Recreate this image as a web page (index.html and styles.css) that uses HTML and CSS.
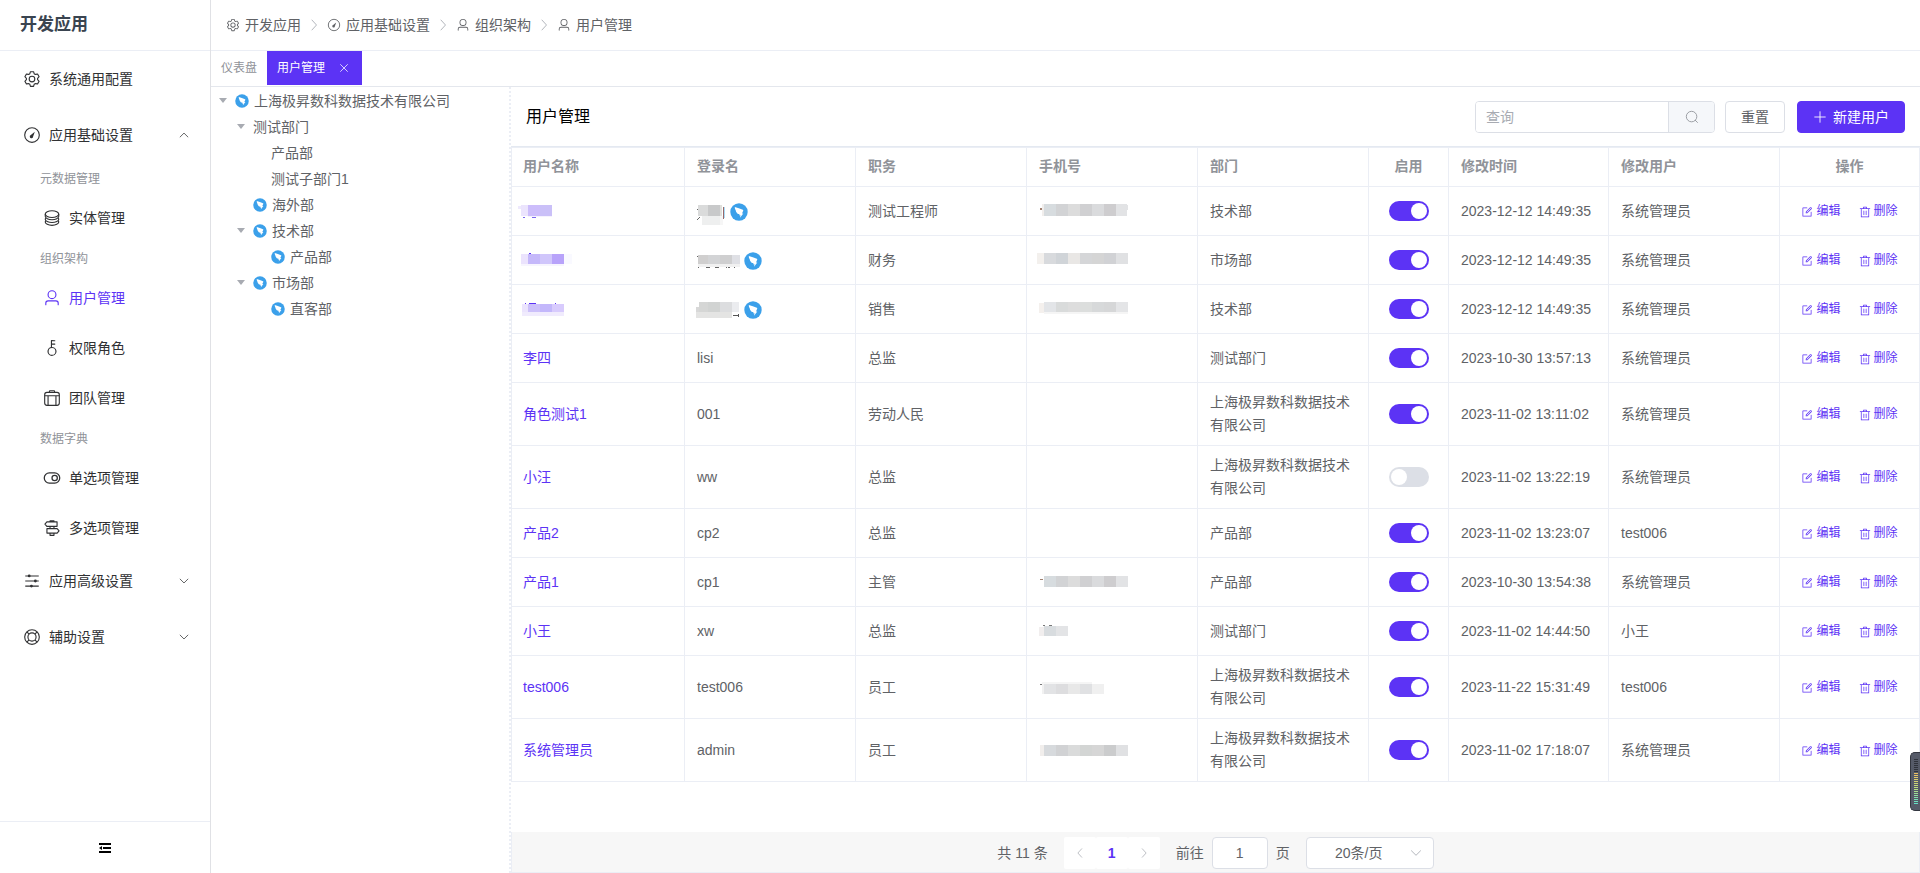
FILE: index.html
```html
<!DOCTYPE html>
<html lang="zh-CN">
<head>
<meta charset="utf-8">
<title>用户管理</title>
<link rel="stylesheet" href="styles.css">
</head>
<body>
<svg class="sprite" aria-hidden="true">
  <symbol id="i-setting" viewBox="0 0 1024 1024"><path fill="currentColor" d="M600.704 64a32 32 0 0 1 30.464 22.208l35.2 109.376c14.784 7.232 28.928 15.36 42.432 24.512l112.384-24.192a32 32 0 0 1 34.432 15.36L944.32 364.8a32 32 0 0 1-4.032 37.504l-77.12 85.12a357.12 357.12 0 0 1 0 49.024l77.12 85.248a32 32 0 0 1 4.032 37.504l-88.704 153.6a32 32 0 0 1-34.432 15.296L708.8 803.904c-13.44 9.088-27.648 17.28-42.368 24.512l-35.264 109.376A32 32 0 0 1 600.704 960H423.296a32 32 0 0 1-30.464-22.208L357.696 828.48a351.616 351.616 0 0 1-42.56-24.64l-112.32 24.256a32 32 0 0 1-34.432-15.36L79.68 659.2a32 32 0 0 1 4.032-37.504l77.12-85.248a357.12 357.12 0 0 1 0-48.896l-77.12-85.248A32 32 0 0 1 79.68 364.8l88.704-153.6a32 32 0 0 1 34.432-15.296l112.32 24.256c13.568-9.152 27.776-17.408 42.56-24.64l35.2-109.312A32 32 0 0 1 423.232 64H600.64zm-23.424 64H446.72l-36.352 113.088-24.512 11.968a294.113 294.113 0 0 0-34.816 20.096l-22.656 15.36-116.224-25.088-65.28 113.152 79.68 88.192-1.92 27.136a293.12 293.12 0 0 0 0 40.192l1.92 27.136-79.808 88.192 65.344 113.152 116.224-25.024 22.656 15.296a294.113 294.113 0 0 0 34.816 20.096l24.512 11.968L446.72 896h130.688l36.48-113.152 24.448-11.904a288.282 288.282 0 0 0 34.752-20.096l22.592-15.296 116.288 25.024 65.28-113.152-79.744-88.192 1.92-27.136a293.12 293.12 0 0 0 0-40.256l-1.92-27.136 79.808-88.128-65.344-113.152-116.288 24.96-22.592-15.232a287.616 287.616 0 0 0-34.752-20.096l-24.448-11.904L577.344 128zM512 320a192 192 0 1 1 0 384 192 192 0 0 1 0-384zm0 64a128 128 0 1 0 0 256 128 128 0 0 0 0-256z"/></symbol>
  <symbol id="i-compass" viewBox="0 0 1024 1024"><circle cx="512" cy="512" r="416" fill="none" stroke="currentColor" stroke-width="64"/><path fill="currentColor" d="M672 320L576 600a96 96 0 1 1-130-86z"/></symbol>
  <symbol id="i-coin" viewBox="0 0 1024 1024"><g fill="none" stroke="currentColor" stroke-width="64"><ellipse cx="512" cy="288" rx="384" ry="192"/><path d="M128 288v128c0 106 172 192 384 192s384-86 384-192V288M160 512c-22 26-32 38-32 64 0 106 172 192 384 192s384-86 384-192c0-26-10-38-32-64M160 672c-22 26-32 38-32 64 0 106 172 192 384 192s384-86 384-192c0-26-10-38-32-64"/></g></symbol>
  <symbol id="i-user" viewBox="0 0 1024 1024"><path fill="currentColor" d="M512 512a192 192 0 1 0 0-384 192 192 0 0 0 0 384zm0 64a256 256 0 1 1 0-512 256 256 0 0 1 0 512zm320 320v-96a96 96 0 0 0-96-96H288a96 96 0 0 0-96 96v96a32 32 0 1 1-64 0v-96a160 160 0 0 1 160-160h448a160 160 0 0 1 160 160v96a32 32 0 1 1-64 0z"/></symbol>
  <symbol id="i-key" viewBox="0 0 1024 1024"><path fill="currentColor" d="M448 456.064V96a32 32 0 0 1 32-32.064L672 64a32 32 0 0 1 0 64H512v128h160a32 32 0 0 1 0 64H512v128a256 256 0 1 1-64 8.064zM512 896a192 192 0 1 0 0-384 192 192 0 0 0 0 384z"/></symbol>
  <symbol id="i-suitcase" viewBox="0 0 1024 1024"><g fill="none" stroke="currentColor" stroke-width="64"><rect x="96" y="192" width="832" height="736" rx="128"/><path d="M352 192l32-96h256l32 96M96 384h832M288 384v544M736 384v544"/></g></symbol>
  <symbol id="i-switch" viewBox="0 0 1024 1024"><g fill="none" stroke="currentColor" stroke-width="72"><rect x="72" y="224" width="880" height="576" rx="288"/><circle cx="664" cy="512" r="152"/></g></symbol>
  <symbol id="i-guide" viewBox="0 0 1024 1024"><g fill="none" stroke="currentColor" stroke-width="64"><path d="M400 160V96h224v64M400 416v128M624 416v128M400 800v128h224V800M220 160h580v256H220L110 288zM804 544H224v256h580l110-128z" stroke-linejoin="round"/></g></symbol>
  <symbol id="i-operation" viewBox="0 0 1024 1024"><path d="M128 224h768M128 512h768M128 800h768" stroke="currentColor" stroke-width="64" fill="none"/><g fill="currentColor"><circle cx="352" cy="224" r="80"/><circle cx="704" cy="512" r="80"/><circle cx="480" cy="800" r="80"/></g></symbol>
  <symbol id="i-help" viewBox="0 0 1024 1024"><g fill="none" stroke="currentColor" stroke-width="64"><circle cx="512" cy="512" r="416"/><circle cx="512" cy="512" r="232"/><path d="M218 218l130 130M806 218L676 348M218 806l130-130M806 806L676 676"/></g></symbol>
  <symbol id="i-edit" viewBox="0 0 1024 1024"><path fill="currentColor" d="M832 512a32 32 0 1 1 64 0v352a32 32 0 0 1-32 32H160a32 32 0 0 1-32-32V160a32 32 0 0 1 32-32h352a32 32 0 0 1 0 64H192v640h640V512z"/><path fill="currentColor" d="m469.952 554.24 52.8-7.552L847.104 222.4a32 32 0 1 0-45.248-45.248L477.44 501.44l-7.552 52.8zm422.4-422.4a96 96 0 0 1 0 135.808l-331.84 331.84a32 32 0 0 1-18.112 9.088L436.8 623.68a32 32 0 0 1-36.224-36.224l15.104-105.6a32 32 0 0 1 9.024-18.112l331.904-331.84a96 96 0 0 1 135.744 0z"/></symbol>
  <symbol id="i-delete" viewBox="0 0 1024 1024"><path fill="currentColor" d="M160 256H96a32 32 0 0 1 0-64h256V95.936a32 32 0 0 1 32-32h256a32 32 0 0 1 32 32V192h256a32 32 0 1 1 0 64h-64v672a32 32 0 0 1-32 32H192a32 32 0 0 1-32-32V256zm448-64v-64H416v64h192zM224 896h576V256H224v640zm192-128a32 32 0 0 1-32-32V416a32 32 0 0 1 64 0v320a32 32 0 0 1-32 32zm192 0a32 32 0 0 1-32-32V416a32 32 0 0 1 64 0v320a32 32 0 0 1-32 32z"/></symbol>
  <symbol id="i-search" viewBox="0 0 1024 1024"><g fill="none" stroke="currentColor" stroke-width="64"><circle cx="480" cy="480" r="384"/><path d="M750 750l160 160" stroke-linecap="round"/></g></symbol>
  <symbol id="i-plus" viewBox="0 0 1024 1024"><path d="M512 128v768M128 512h768" stroke="currentColor" stroke-width="64" stroke-linecap="round"/></symbol>
  <symbol id="i-close" viewBox="0 0 1024 1024"><path d="M218 218l588 588M806 218L218 806" stroke="currentColor" stroke-width="64" stroke-linecap="round"/></symbol>
  <symbol id="i-right" viewBox="0 0 1024 1024"><path d="M364 150l330 362-330 362" stroke="currentColor" stroke-width="64" stroke-linecap="round" fill="none"/></symbol>
  <symbol id="i-left" viewBox="0 0 1024 1024"><path d="M660 150L330 512l330 362" stroke="currentColor" stroke-width="64" stroke-linecap="round" fill="none"/></symbol>
  <symbol id="i-down" viewBox="0 0 1024 1024"><path d="M180 350l332 330 332-330" stroke="currentColor" stroke-width="64" stroke-linecap="round" fill="none"/></symbol>
  <symbol id="i-up" viewBox="0 0 1024 1024"><path d="M180 680l332-330 332 330" stroke="currentColor" stroke-width="64" stroke-linecap="round" fill="none"/></symbol>
  <symbol id="i-ding" viewBox="0 0 18 18"><circle cx="9" cy="9" r="8.7" fill="#3ba0ea"/><path fill="#fff" d="M4.800 4c2.600 1 5.400 1.600 8 2.700.5.300.6.600.4 1.100l-1.200 2.600h1.300L10 14.800l.5-2.600H9.100l.4-1.200c-1.300.2-2-.2-2.500-1.100-.8-.8-1.200-1.600-1.300-2.600C5 6.200 4.700 5.100 4.800 4z"/></symbol>
  <symbol id="i-fold" viewBox="0 0 12 10"><path fill="currentColor" d="M0 0h12v2H0zM4 4h8v2H4zM0 8h12v2H0zM0 5l3-2v4z"/></symbol>
</svg>

<aside class="sidebar">
  <div class="brand">开发应用</div>
  <nav class="menu">
    <a class="menu-item" href="#"><svg class="menu-icon"><use href="#i-setting"/></svg>系统通用配置</a>
    <button class="menu-item" type="button"><svg class="menu-icon"><use href="#i-compass"/></svg>应用基础设置<svg class="menu-arrow"><use href="#i-up"/></svg></button>
    <div class="group-title">元数据管理</div>
    <a class="menu-item sub" href="#"><svg class="menu-icon"><use href="#i-coin"/></svg>实体管理</a>
    <div class="group-title">组织架构</div>
    <a class="menu-item sub active" href="#"><svg class="menu-icon"><use href="#i-user"/></svg>用户管理</a>
    <a class="menu-item sub" href="#"><svg class="menu-icon"><use href="#i-key"/></svg>权限角色</a>
    <a class="menu-item sub" href="#"><svg class="menu-icon"><use href="#i-suitcase"/></svg>团队管理</a>
    <div class="group-title">数据字典</div>
    <a class="menu-item sub" href="#"><svg class="menu-icon"><use href="#i-switch"/></svg>单选项管理</a>
    <a class="menu-item sub" href="#"><svg class="menu-icon"><use href="#i-guide"/></svg>多选项管理</a>
    <button class="menu-item" type="button"><svg class="menu-icon"><use href="#i-operation"/></svg>应用高级设置<svg class="menu-arrow"><use href="#i-down"/></svg></button>
    <button class="menu-item" type="button"><svg class="menu-icon"><use href="#i-help"/></svg>辅助设置<svg class="menu-arrow"><use href="#i-down"/></svg></button>
  </nav>
  <button class="collapse" type="button" aria-label="收起菜单"><svg class="fold-icon"><use href="#i-fold"/></svg></button>
</aside>

<div class="page">
  <nav class="breadcrumb" aria-label="breadcrumb">
    <a class="crumb" href="#"><svg class="icon-14"><use href="#i-setting"/></svg>开发应用</a>
    <svg class="icon-14 crumb-sep"><use href="#i-right"/></svg>
    <a class="crumb" href="#"><svg class="icon-14"><use href="#i-compass"/></svg>应用基础设置</a>
    <svg class="icon-14 crumb-sep"><use href="#i-right"/></svg>
    <a class="crumb" href="#"><svg class="icon-14"><use href="#i-user"/></svg>组织架构</a>
    <svg class="icon-14 crumb-sep"><use href="#i-right"/></svg>
    <a class="crumb" href="#"><svg class="icon-14"><use href="#i-user"/></svg>用户管理</a>
  </nav>
  <div class="tabs">
    <a class="tab" href="#">仪表盘</a>
    <div class="tab tab-active"><a class="tab-link" href="#">用户管理</a><button class="tab-close" type="button" aria-label="关闭"><svg class="icon-12"><use href="#i-close"/></svg></button></div>
  </div>

  <div class="content">
    <ul class="tree">
      <li class="node"><span class="caret open"></span><svg class="node-icon"><use href="#i-ding"/></svg>上海极昇数科数据技术有限公司</li>
      <li class="node level-1"><span class="caret open"></span>测试部门</li>
      <li class="node level-2"><span class="caret"></span>产品部</li>
      <li class="node level-2"><span class="caret"></span>测试子部门1</li>
      <li class="node level-1"><span class="caret"></span><svg class="node-icon"><use href="#i-ding"/></svg>海外部</li>
      <li class="node level-1"><span class="caret open"></span><svg class="node-icon"><use href="#i-ding"/></svg>技术部</li>
      <li class="node level-2"><span class="caret"></span><svg class="node-icon"><use href="#i-ding"/></svg>产品部</li>
      <li class="node level-1"><span class="caret open"></span><svg class="node-icon"><use href="#i-ding"/></svg>市场部</li>
      <li class="node level-2"><span class="caret"></span><svg class="node-icon"><use href="#i-ding"/></svg>直客部</li>
    </ul>

    <main class="panel">
      <header class="toolbar">
        <h1 class="title">用户管理</h1>
        <div class="search">
          <input class="search-input" type="text" placeholder="查询" aria-label="查询">
          <button class="search-btn" type="button" aria-label="搜索"><svg class="icon-14"><use href="#i-search"/></svg></button>
        </div>
        <button class="btn" type="button">重置</button>
        <button class="btn btn-primary" type="button"><svg class="icon-14"><use href="#i-plus"/></svg>新建用户</button>
      </header>

      <div class="table-wrap">
        <table class="table">
          <colgroup><col><col class="w-text"><col class="w-text"><col class="w-text"><col class="w-text"><col class="w-switch"><col class="w-time"><col class="w-text"><col class="w-actions"></colgroup>
          <thead>
            <tr><th>用户名称</th><th>登录名</th><th>职务</th><th>手机号</th><th>部门</th><th class="center">启用</th><th>修改时间</th><th>修改用户</th><th class="center">操作</th></tr>
          </thead>
          <tbody>
            <tr>
              <td><svg class="mask mask-name"><path fill="#eee9fd" d="M-5 7h3v3h-3z"/><path fill="#ebe4fd" d="M-2 6h7v11h-7z"/><path fill="#ccbdfb" d="M5 6h12v11H5z"/><path fill="#cac0f8" d="M17 6h12v11H17z"/><path fill="#f5f2fe" d="M5 17h24v1H5z"/><path fill="#7a66f0" d="M0 18h2v1H0zM9 18h4v1H9z"/></svg></td>
              <td><div class="login"><svg class="mask mask-short"><path fill="#dadbdb" d="M1 6h10v11H1z"/><path fill="#c8c9ca" d="M11 6h12v11H11z"/><path fill="#e0e0dc" d="M23 6h2v11h-2z"/><path fill="#eeefef" d="M5 17h18v9H5z"/><path fill="#f6f6f6" d="M23 17h3v9h-3z"/><path fill="#666" d="M0 10h1v1H0zM2 18h1v1H2zM1 19h1v1H1zM0 20h1v1H0z"/><path fill="#9a6a6a" d="M26 8h1v12h-1z"/><path fill="#a9dcf7" d="M27 8h1v11h-1z"/></svg><svg class="ding"><use href="#i-ding"/></svg></div></td>
              <td>测试工程师</td>
              <td><svg class="mask mask-phone"><path fill="#a08070" d="M1 9h2v2H1z"/><path fill="#f1eeec" d="M3 5h2v12H3z"/><path fill="#d7dcdf" d="M5 5h12v12H5z"/><path fill="#d2d3d5" d="M17 5h12v12H17z"/><path fill="#dcdcdc" d="M29 5h12v12H29z"/><path fill="#d0d0d2" d="M41 5h12v12H41z"/><path fill="#dadbdd" d="M53 5h12v12H53z"/><path fill="#cecdcf" d="M65 5h12v12H65z"/><path fill="#e2e3e5" d="M77 5h11v12H77zM88 6h1v5h-1z"/></svg></td>
              <td>技术部</td>
              <td class="center"><input class="switch" type="checkbox" aria-label="启用" checked></td>
              <td>2023-12-12 14:49:35</td>
              <td>系统管理员</td>
              <td><div class="actions"><button class="link-btn" type="button"><svg class="icon-12"><use href="#i-edit"/></svg>编辑</button><button class="link-btn" type="button"><svg class="icon-12"><use href="#i-delete"/></svg>删除</button></div></td>
            </tr>
            <tr>
              <td><svg class="mask mask-name"><path fill="#ebe3fd" d="M-2 6h7v10h-7z"/><path fill="#c5b8fa" d="M5 6h12v10H5z"/><path fill="#d0c6fb" d="M17 6h12v10H17z"/><path fill="#b8a3fa" d="M29 6h12v10H29z"/><path fill="#f9f9ff" d="M41 6h8v10h-8z"/><path fill="#f7f5fe" d="M-2 16h43v2H-2z"/><path fill="#5c33f5" d="M6 5h2v1H6z"/></svg></td>
              <td><div class="login"><svg class="mask mask-long"><path fill="#d0cfcf" d="M1 7h10v9H1z"/><path fill="#d3d4d6" d="M11 7h12v9H11z"/><path fill="#cfcfd0" d="M23 7h12v9H23z"/><path fill="#dfe0e5" d="M35 7h8v9h-8z"/><path fill="#f1f1f1" d="M1 16h42v3H1z"/><path fill="#666" d="M0 8h1v1H0zM1 19h1v1H1zM9 19h4v1H9zM18 19h4v1h-4zM29 19h1v1h-1zM31 19h2v1h-2zM37 19h1v1h-1z"/></svg><svg class="ding"><use href="#i-ding"/></svg></div></td>
              <td>财务</td>
              <td><svg class="mask mask-phone"><path fill="#f3f0ed" d="M-2 5h7v11h-7z"/><path fill="#d8dadd" d="M5 5h12v11H5z"/><path fill="#d0d4d8" d="M17 5h12v11H17z"/><path fill="#e9e7e5" d="M29 5h12v11H29z"/><path fill="#d5d6d8" d="M41 5h12v11H41z"/><path fill="#d5d5d5" d="M53 5h12v11H53z"/><path fill="#d1d2d5" d="M65 5h12v11H65z"/><path fill="#e0e1e3" d="M77 5h12v11H77z"/></svg></td>
              <td>市场部</td>
              <td class="center"><input class="switch" type="checkbox" aria-label="启用" checked></td>
              <td>2023-12-12 14:49:35</td>
              <td>系统管理员</td>
              <td><div class="actions"><button class="link-btn" type="button"><svg class="icon-12"><use href="#i-edit"/></svg>编辑</button><button class="link-btn" type="button"><svg class="icon-12"><use href="#i-delete"/></svg>删除</button></div></td>
            </tr>
            <tr>
              <td><svg class="mask mask-name"><path fill="#ebe4fd" d="M-1 7h6v8h-6z"/><path fill="#ccc0fa" d="M5 7h12v8H5z"/><path fill="#c3b7fb" d="M17 7h12v8H17z"/><path fill="#d8cbfd" d="M29 7h12v8H29z"/><path fill="#f0ebfd" d="M-1 15h42v4H-1z"/><path fill="#5c33f5" d="M2 6h1v1H2zM6 6h7v1H6zM32 6h1v1h-1z"/></svg></td>
              <td><div class="login"><svg class="mask mask-long"><path fill="#d5d6d5" d="M2 5h9v10H2z"/><path fill="#d1d3d2" d="M11 5h12v10H11z"/><path fill="#dcdddf" d="M23 5h12v10H23z"/><path fill="#ebecef" d="M35 5h7v10h-7z"/><path fill="#d8d8d8" d="M-1 10h3v5h-3z"/><path fill="#e4e4e3" d="M-1 15h36v6H-1z"/><path fill="#555" d="M36 18h5v1h-5zM41 17h1v3h-1z"/></svg><svg class="ding"><use href="#i-ding"/></svg></div></td>
              <td>销售</td>
              <td><svg class="mask mask-phone"><path fill="#f4f0ed" d="M0 6h5v10H0z"/><path fill="#e3e5e8" d="M5 5h12v10H5z"/><path fill="#d9dbdb" d="M17 5h12v10H17z"/><path fill="#ddd" d="M29 5h12v10H29z"/><path fill="#dcdedd" d="M41 5h12v10H41z"/><path fill="#d7d9da" d="M53 5h12v10H53z"/><path fill="#d6d7d8" d="M65 5h12v10H65z"/><path fill="#e4e5e7" d="M77 5h12v10H77z"/><path fill="#f5f5f5" d="M5 15h84v2H5z"/></svg></td>
              <td>技术部</td>
              <td class="center"><input class="switch" type="checkbox" aria-label="启用" checked></td>
              <td>2023-12-12 14:49:35</td>
              <td>系统管理员</td>
              <td><div class="actions"><button class="link-btn" type="button"><svg class="icon-12"><use href="#i-edit"/></svg>编辑</button><button class="link-btn" type="button"><svg class="icon-12"><use href="#i-delete"/></svg>删除</button></div></td>
            </tr>
            <tr>
              <td><a class="name" href="#">李四</a></td><td>lisi</td><td>总监</td><td></td><td>测试部门</td>
              <td class="center"><input class="switch" type="checkbox" aria-label="启用" checked></td>
              <td>2023-10-30 13:57:13</td><td>系统管理员</td>
              <td><div class="actions"><button class="link-btn" type="button"><svg class="icon-12"><use href="#i-edit"/></svg>编辑</button><button class="link-btn" type="button"><svg class="icon-12"><use href="#i-delete"/></svg>删除</button></div></td>
            </tr>
            <tr>
              <td><a class="name" href="#">角色测试1</a></td><td>001</td><td>劳动人民</td><td></td><td>上海极昇数科数据技术有限公司</td>
              <td class="center"><input class="switch" type="checkbox" aria-label="启用" checked></td>
              <td>2023-11-02 13:11:02</td><td>系统管理员</td>
              <td><div class="actions"><button class="link-btn" type="button"><svg class="icon-12"><use href="#i-edit"/></svg>编辑</button><button class="link-btn" type="button"><svg class="icon-12"><use href="#i-delete"/></svg>删除</button></div></td>
            </tr>
            <tr>
              <td><a class="name" href="#">小汪</a></td><td>ww</td><td>总监</td><td></td><td>上海极昇数科数据技术有限公司</td>
              <td class="center"><input class="switch" type="checkbox" aria-label="启用"></td>
              <td>2023-11-02 13:22:19</td><td>系统管理员</td>
              <td><div class="actions"><button class="link-btn" type="button"><svg class="icon-12"><use href="#i-edit"/></svg>编辑</button><button class="link-btn" type="button"><svg class="icon-12"><use href="#i-delete"/></svg>删除</button></div></td>
            </tr>
            <tr>
              <td><a class="name" href="#">产品2</a></td><td>cp2</td><td>总监</td><td></td><td>产品部</td>
              <td class="center"><input class="switch" type="checkbox" aria-label="启用" checked></td>
              <td>2023-11-02 13:23:07</td><td>test006</td>
              <td><div class="actions"><button class="link-btn" type="button"><svg class="icon-12"><use href="#i-edit"/></svg>编辑</button><button class="link-btn" type="button"><svg class="icon-12"><use href="#i-delete"/></svg>删除</button></div></td>
            </tr>
            <tr>
              <td><a class="name" href="#">产品1</a></td><td>cp1</td><td>主管</td>
              <td><svg class="mask mask-phone"><path fill="#a08070" d="M1 9h3v1H1z"/><path fill="#d7dcdf" d="M5 6h12v11H5z"/><path fill="#d2d3d5" d="M17 6h12v11H17z"/><path fill="#dcdcdc" d="M29 6h12v11H29z"/><path fill="#d0d0d2" d="M41 6h12v11H41z"/><path fill="#dadbdd" d="M53 6h12v11H53z"/><path fill="#cecdcf" d="M65 6h12v11H65z"/><path fill="#e2e3e5" d="M77 6h12v11H77z"/></svg></td>
              <td>产品部</td>
              <td class="center"><input class="switch" type="checkbox" aria-label="启用" checked></td>
              <td>2023-10-30 13:54:38</td><td>系统管理员</td>
              <td><div class="actions"><button class="link-btn" type="button"><svg class="icon-12"><use href="#i-edit"/></svg>编辑</button><button class="link-btn" type="button"><svg class="icon-12"><use href="#i-delete"/></svg>删除</button></div></td>
            </tr>
            <tr>
              <td><a class="name" href="#">小王</a></td><td>xw</td><td>总监</td>
              <td><svg class="mask mask-phone"><path fill="#f1eeee" d="M0 8h5v9H0z"/><path fill="#d8dcdf" d="M5 7h12v10H5z"/><path fill="#e3e4e6" d="M17 7h12v10H17z"/><path fill="#777" d="M4 6h2v1H4zM10 6h3v1h-3z"/></svg></td>
              <td>测试部门</td>
              <td class="center"><input class="switch" type="checkbox" aria-label="启用" checked></td>
              <td>2023-11-02 14:44:50</td><td>小王</td>
              <td><div class="actions"><button class="link-btn" type="button"><svg class="icon-12"><use href="#i-edit"/></svg>编辑</button><button class="link-btn" type="button"><svg class="icon-12"><use href="#i-delete"/></svg>删除</button></div></td>
            </tr>
            <tr>
              <td><a class="name" href="#">test006</a></td><td>test006</td><td>员工</td>
              <td><svg class="mask mask-phone"><path fill="#777" d="M1 9h2v1H1z"/><path fill="#f5f5f5" d="M3 7h50v2H3z"/><path fill="#f1f1f1" d="M3 9h2v10H3z"/><path fill="#e2e3e5" d="M5 9h12v10H5z"/><path fill="#dddddf" d="M17 9h12v10H17z"/><path fill="#e8e8e8" d="M29 9h12v10H29z"/><path fill="#e0e1e3" d="M41 9h12v10H41z"/><path fill="#f0f0f0" d="M53 9h12v10H53z"/></svg></td>
              <td>上海极昇数科数据技术有限公司</td>
              <td class="center"><input class="switch" type="checkbox" aria-label="启用" checked></td>
              <td>2023-11-22 15:31:49</td><td>test006</td>
              <td><div class="actions"><button class="link-btn" type="button"><svg class="icon-12"><use href="#i-edit"/></svg>编辑</button><button class="link-btn" type="button"><svg class="icon-12"><use href="#i-delete"/></svg>删除</button></div></td>
            </tr>
            <tr>
              <td><a class="name" href="#">系统管理员</a></td><td>admin</td><td>员工</td>
              <td><svg class="mask mask-phone"><path fill="#f1eeec" d="M1 7h4v11H1z"/><path fill="#d7dadd" d="M5 7h12v11H5z"/><path fill="#d1d2d4" d="M17 7h12v11H17z"/><path fill="#dadbdb" d="M29 7h12v11H29z"/><path fill="#d3d5d4" d="M41 7h12v11H41z"/><path fill="#d6d6d6" d="M53 7h12v11H53z"/><path fill="#cbcccd" d="M65 7h12v11H65z"/><path fill="#e0e1e3" d="M77 7h12v11H77z"/></svg></td>
              <td>上海极昇数科数据技术有限公司</td>
              <td class="center"><input class="switch" type="checkbox" aria-label="启用" checked></td>
              <td>2023-11-02 17:18:07</td><td>系统管理员</td>
              <td><div class="actions"><button class="link-btn" type="button"><svg class="icon-12"><use href="#i-edit"/></svg>编辑</button><button class="link-btn" type="button"><svg class="icon-12"><use href="#i-delete"/></svg>删除</button></div></td>
            </tr>
          </tbody>
        </table>
      </div>

      <footer class="pagination">
        <span class="total">共 11 条</span>
        <div class="pager">
          <button class="page-btn" type="button" aria-label="上一页" disabled><svg class="icon-12"><use href="#i-left"/></svg></button>
          <button class="page-btn current" type="button">1</button>
          <button class="page-btn" type="button" aria-label="下一页" disabled><svg class="icon-12"><use href="#i-right"/></svg></button>
        </div>
        <label class="jump">前往<input class="jump-input" type="text" value="1">页</label>
        <div class="size">
          <select class="size-select" aria-label="每页条数"><option>20条/页</option></select>
          <svg class="icon-14 size-arrow"><use href="#i-down"/></svg>
        </div>
      </footer>
    </main>
  </div>
</div>
<div class="meter"><span class="meter-bars"></span></div>
</body>
</html>
```

FILE: styles.css
```css
* { box-sizing: border-box; }

body {
  margin: 0;
  display: flex;
  height: 100vh;
  overflow: hidden;
  background: #fff;
  color: #606266;
  font: 14px/20px "Liberation Sans", "Noto Sans CJK SC", sans-serif;
}

a { color: inherit; text-decoration: none; }
button, input, select { font: inherit; color: inherit; margin: 0; }
button { padding: 0; border: 0; background: none; cursor: pointer; }
svg { display: block; flex: none; }
.sprite { position: absolute; width: 0; height: 0; }
.icon-12 { width: 12px; height: 12px; }
.icon-14 { width: 14px; height: 14px; }

/* Sidebar */
.sidebar {
  display: flex;
  flex-direction: column;
  flex: none;
  width: 211px;
  border-right: 1px solid #e0e1e5;
  color: #303133;
}
.brand {
  height: 51px;
  padding: 0 20px;
  border-bottom: 1px solid #ebeef5;
  color: #3a4450;
  font-size: 17px;
  font-weight: bold;
  line-height: 50px;
}
.menu { flex: 1; overflow: hidden; }
.menu-item {
  display: flex;
  align-items: center;
  width: 100%;
  height: 56px;
  padding: 0 20px;
}
.menu-item.sub { height: 50px; padding-left: 40px; }
.menu-item.active { color: #5c33f5; }
.menu-icon { width: 18px; height: 18px; margin: 0 8px 0 3px; }
.menu-arrow { width: 12px; height: 12px; margin-left: auto; }
.group-title {
  padding: 8px 20px 6px 40px;
  color: #909399;
  font-size: 12px;
  line-height: 16px;
}
.collapse {
  display: flex;
  align-items: center;
  justify-content: center;
  height: 52px;
  border-top: 1px solid #ebeef5;
  color: #000;
}
.fold-icon { width: 12px; height: 10px; }

/* Header */
.page { display: flex; flex-direction: column; flex: 1; min-width: 0; }
.breadcrumb {
  display: flex;
  align-items: center;
  height: 51px;
  padding: 0 15px 1px;
  border-bottom: 1px solid #ebeef5;
}
.crumb { display: flex; align-items: center; gap: 5px; }
.crumb-sep { margin: 0 6px; color: #a8abb2; }
.tabs {
  display: flex;
  height: 36px;
  padding-bottom: 1px;
  border-bottom: 1px solid #e4e7ed;
  font-size: 12px;
}
.tab { display: flex; align-items: center; padding: 0 10px; color: #909399; }
.tab-active { gap: 13px; padding-right: 12px; background: #5c33f5; color: #fff; }

/* Department tree */
.content { display: flex; flex: 1; min-height: 0; }
.tree {
  flex: none;
  width: 300px;
  margin: 0;
  padding: 1px 0;
  border-right: 2px dotted #ebeef5;
  list-style: none;
}
.node { display: flex; align-items: center; height: 26px; }
.level-1 { padding-left: 18px; }
.level-2 { padding-left: 36px; }
.caret { flex: none; width: 24px; height: 12px; }
.caret.open::before {
  content: "";
  display: block;
  width: 0;
  margin: 3px 8px;
  border: 4px solid transparent;
  border-top: 5px solid #a8abb2;
  border-bottom: 0;
}
.node-icon { width: 14px; height: 14px; margin-right: 5px; }

/* Toolbar */
.panel { display: flex; flex-direction: column; flex: 1; min-width: 0; }
.toolbar {
  display: flex;
  align-items: center;
  padding: 14px 15px 13px;
  border-bottom: 1px solid #e4e9f1;
}
.title { margin: 0 auto 0 0; color: #000; font-size: 16px; font-weight: normal; line-height: 24px; }
.search {
  display: flex;
  width: 240px;
  height: 32px;
  margin-right: 10px;
  border: 1px solid #dcdfe6;
  border-radius: 4px;
  overflow: hidden;
}
.search-input { flex: 1; min-width: 0; padding: 0 10px; border: 0; outline: 0; background: #fff; }
.search-input::placeholder { color: #a8abb2; }
.search-btn {
  display: flex;
  align-items: center;
  justify-content: center;
  width: 46px;
  border-left: 1px solid #dcdfe6;
  background: #f5f7fa;
  color: #909399;
}
.btn {
  display: flex;
  align-items: center;
  gap: 6px;
  height: 32px;
  padding: 0 15px;
  border: 1px solid #dcdfe6;
  border-radius: 4px;
  background: #fff;
}
.btn-primary { margin-left: 12px; border-color: #5c33f5; background: #5c33f5; color: #fff; }

/* Table */
.table-wrap {
  flex: 1;
  min-height: 0;
  overflow: hidden;
  border-top: 1px solid #ebeef5;
}
.table { width: 100%; border-spacing: 0; table-layout: fixed; }
.w-text { width: 171px; }
.w-switch { width: 80px; }
.w-time { width: 160px; }
.w-actions { width: 140px; }
.table th, .table td {
  padding: 8px 12px;
  border-right: 1px solid #ebeef5;
  border-bottom: 1px solid #ebeef5;
  line-height: 23px;
  text-align: left;
  vertical-align: middle;
}
.table th { padding: 7px 12px 8px; color: #909399; }
.table th:first-child, .table td:first-child { padding-left: 11px; border-left: 1px solid #ebeef5; }
.table td { height: 49px; }
.table .center { padding-left: 0; padding-right: 0; text-align: center; }
.name { color: #5c33f5; }
.login { display: flex; align-items: center; gap: 5px; }
.ding { width: 18px; height: 18px; margin-top: 2px; }
.mask { height: 24px; overflow: visible; shape-rendering: crispEdges; }
.mask-name { width: 42px; }
.mask-short { width: 28px; }
.mask-long { width: 42px; }
.mask-phone { width: 90px; }
.switch {
  display: block;
  width: 40px;
  height: 20px;
  margin: 0 auto;
  padding: 2px;
  border-radius: 10px;
  appearance: none;
  background: #dcdfe6;
}
.switch::before {
  content: "";
  display: block;
  width: 16px;
  height: 16px;
  border-radius: 50%;
  background: #fff;
}
.switch:checked { background: #5c33f5; }
.switch:checked::before { margin-left: auto; }
.actions { display: flex; justify-content: center; gap: 18px; margin: 0 -8px; }
.link-btn {
  display: flex;
  align-items: center;
  gap: 3px;
  height: 24px;
  padding-top: 1px;
  color: #5c33f5;
  font-size: 12px;
}

/* Pagination */
.pagination {
  display: flex;
  align-items: center;
  justify-content: center;
  gap: 16px;
  padding: 5px 0 3px;
  border: 1px solid #ebeef5;
  border-top: 0;
  background: #f7f7f7;
}
.pager { display: flex; }
.page-btn {
  display: flex;
  align-items: center;
  justify-content: center;
  width: 32px;
  height: 32px;
  border-radius: 2px;
  background: #fff;
  color: #a8abb2;
}
.page-btn.current { color: #5c33f5; font-weight: bold; }
.jump { display: flex; align-items: center; gap: 8px; }
.jump-input {
  width: 56px;
  height: 32px;
  border: 1px solid #dcdfe6;
  border-radius: 4px;
  background: #fff;
  text-align: center;
}
.size { position: relative; }
.size-select {
  display: block;
  width: 128px;
  height: 32px;
  padding: 0 35px 0 13px;
  border: 1px solid #dcdfe6;
  border-radius: 4px;
  appearance: none;
  background: #fff;
  text-align-last: center;
}
.size-arrow { position: absolute; top: 9px; right: 11px; color: #a8abb2; pointer-events: none; }

/* Level meter docked on the window edge */
.meter {
  position: fixed;
  right: 0;
  bottom: 62px;
  width: 10px;
  height: 59px;
  padding: 6px 2px 7px 3px;
  border: 1px solid #33363f;
  border-right: 0;
  border-radius: 5px 0 0 5px;
  background: #555a68;
}
.meter-bars {
  display: block;
  width: 4px;
  height: 45px;
  background:
    repeating-linear-gradient(transparent 0 1px, #555a68 1px 2px),
    linear-gradient(#2f323b 0 14px, #f0c060 14px, #b8e080 30px, #60e0c8);
}
```
